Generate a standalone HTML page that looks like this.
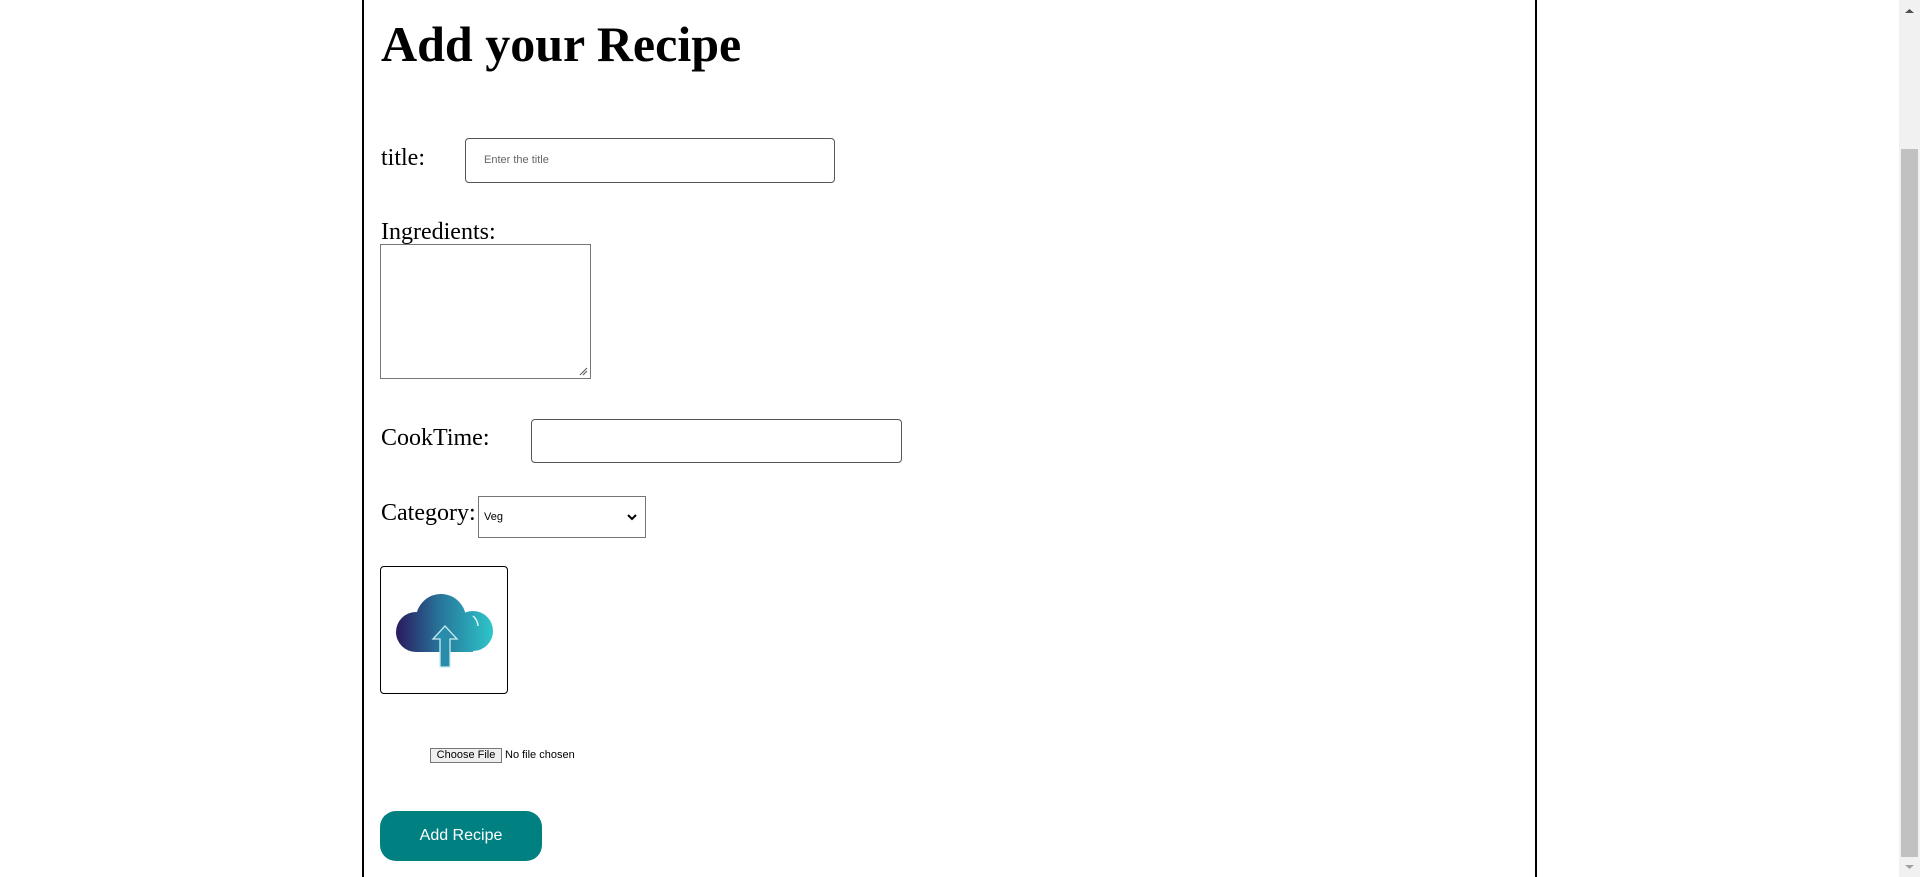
<!DOCTYPE html>
<html><head><meta charset="utf-8"><style>
html,body{margin:0;padding:0;background:#fff;width:1920px;height:877px;overflow:hidden;font-family:"Liberation Serif",serif;}
.l{position:absolute;top:0;height:877px;width:2px;background:#000;}
.a{position:absolute;white-space:nowrap;}
.lab{font-size:24px;color:#000;}
.box{position:absolute;box-sizing:border-box;border:1px solid #767676;background:#fff;}
</style></head><body>
<div class="l" style="left:362px"></div>
<div class="l" style="left:1535px"></div>
<div class="a" style="left:381px;top:15px;font-size:50px;font-weight:bold;">Add your Recipe</div>
<div class="a lab" style="left:381px;top:145px;">title:</div>
<div class="box" style="left:465px;top:138px;width:370px;height:45px;border-radius:4px;border-color:#555;"></div>
<div class="a" style="left:484px;top:154px;font:11px 'Liberation Sans',sans-serif;color:#666;">Enter the title</div>
<div class="a lab" style="left:381px;top:219px;">Ingredients:</div>
<div class="box" style="left:380px;top:244px;width:211px;height:135px;"></div>
<svg class="a" style="left:578px;top:366px" width="10" height="10"><path d="M2 9L9 2M5 9L9 5" stroke="#555" stroke-width="1"/></svg>
<div class="a lab" style="left:381px;top:425px;">CookTime:</div>
<div class="box" style="left:531px;top:419px;width:371px;height:44px;border-radius:4px;border-color:#555;"></div>
<div class="a lab" style="left:381px;top:500px;">Category:</div>
<div class="box" style="left:478px;top:496px;width:168px;height:42px;"></div>
<div class="a" style="left:484px;top:511px;font:11px 'Liberation Sans',sans-serif;">Veg</div>
<svg class="a" style="left:626px;top:512px" width="12" height="10"><path d="M2 3L6 7L10 3" stroke="#000" stroke-width="2" fill="none"/></svg>
<div class="box" style="left:380px;top:566px;width:128px;height:128px;border:1.5px solid #000;border-radius:4px;"></div>
<svg class="a" style="left:380px;top:566px" width="130" height="130">
<defs><linearGradient id="g" gradientUnits="userSpaceOnUse" x1="16" y1="0" x2="114" y2="0"><stop offset="0" stop-color="#2a1a5e"/><stop offset=".45" stop-color="#27759a"/><stop offset="1" stop-color="#2ec7ca"/></linearGradient></defs>
<g fill="url(#g)"><circle cx="36" cy="66" r="20"/><circle cx="61" cy="53" r="25"/><circle cx="93" cy="65" r="20"/><rect x="36" y="60" width="57" height="26"/></g>
<path d="M93 50A14 14 0 0 1 98 60" stroke="#d6f4f5" stroke-width="1.5" fill="none"/>
<path d="M60 101V73H53L65 60L77 73H70V101Z" fill="#2a8cab" stroke="#c7ecf0" stroke-width="1.3"/>
</svg>
<div class="a" style="left:430px;top:748px;box-sizing:border-box;width:72px;height:15px;background:#efefef;border:1px solid #767676;font:11px 'Liberation Sans',sans-serif;text-align:center;line-height:13px;">Choose File</div>
<div class="a" style="left:505px;top:749px;font:11px 'Liberation Sans',sans-serif;">No file chosen</div>
<div class="a" style="left:380px;top:811px;width:162px;height:50px;background:#008080;border-radius:16px;color:#fff;font:16px 'Liberation Sans',sans-serif;text-align:center;line-height:50px;">Add Recipe</div>
<div class="a" style="left:1899px;top:0;width:21px;height:877px;background:#f1f1f1;"></div>
<div class="a" style="left:1901px;top:149px;width:17px;height:708px;background:#c1c1c1;"></div>
<svg class="a" style="left:1899px;top:0" width="21" height="877"><path d="M6 13L10.5 9L15 13Z" fill="#505050"/><path d="M6 865L10.5 869L15 865Z" fill="#a3a3a3"/></svg>
</body></html>
